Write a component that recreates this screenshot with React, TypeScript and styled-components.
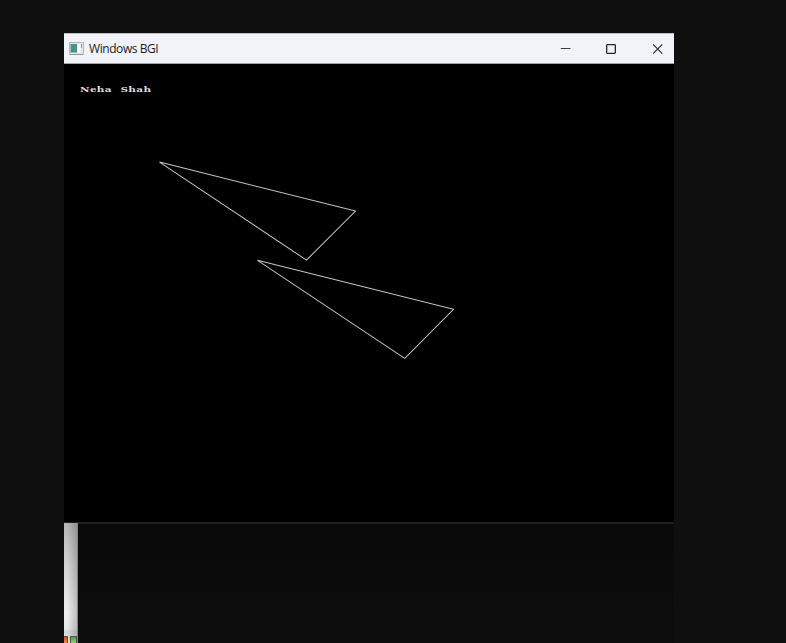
import React from "react";
import styled, { createGlobalStyle } from "styled-components";

const GlobalStyle = createGlobalStyle`
  * { box-sizing: border-box; }
  body { margin: 0; background: #0f0f0f; overflow: hidden; }
`;

const Screen = styled.main`
  width: 786px;
  height: 643px;
  padding: 33px 112px 0 64px;
  background: #0f0f0f;
  overflow: hidden;
`;

const Window = styled.section`
  width: 610px;
  height: 491px;
  display: flex;
  flex-direction: column;
  overflow: hidden;
  border-bottom: 2px solid #212121;
  background: #000;
`;

const TitleBar = styled.header`
  height: 31px;
  flex: none;
  display: flex;
  align-items: center;
  padding-left: 5px;
  background: #f1f3f9;
  border-top: 1px solid #bfc0c4;
  border-bottom: 1px solid #a0a1a4;
`;

const Title = styled.h1`
  flex: 1;
  margin: 0 0 0 5px;
  font: 400 12px/18px "Open Sans", "Noto Sans", sans-serif;
  letter-spacing: -0.43px;
  color: #1d1d20;
`;

const Controls = styled.div`
  display: flex;
  margin-right: -6px;
`;

const ControlButton = styled.button`
  width: 46px;
  height: 29px;
  padding: 0;
  border: 0;
  background: transparent;
  display: grid;
  place-items: center;
`;

const Canvas = styled.div`
  flex: 1;
  display: grid;
  background: #000;

  > * { grid-area: 1 / 1; }
`;

const Label = styled.p`
  margin: 18px 0 0 16px;
  width: 80px;
  height: 14px;
  font: 700 9.5px/14px "DejaVu Serif", serif;
  letter-spacing: 0.3px;
  word-spacing: 4.2px;
  white-space: pre;
  color: #dcdcdc;
  transform: scale(1.1, 0.85);
  transform-origin: 0 50%;
`;

const Drawing = styled.svg`
  display: block;
`;

const Backdrop = styled.div`
  width: 610px;
  height: 119px;
  display: flex;
  align-items: flex-end;
  background: linear-gradient(#090909, #0b0b0b 45%, #0d0d0d);
`;

const Panel = styled.div`
  position: relative;
  width: 14px;
  height: 120px;
  flex: none;
  display: flex;
  flex-direction: column;
  justify-content: flex-end;
  border-right: 1px solid #858585;
  background:
    linear-gradient(90deg, transparent 25%, rgba(0, 0, 0, 0.2)),
    linear-gradient(#b4b4b4, #d0d0d0 30%, #eee 75%, #e7e7e7 88%, #d7d7d7 90%, #e1e1e1);
`;

const Lights = styled.div`
  height: 7px;
  display: flex;
  gap: 2px;
`;

const Light = styled.span<{ $tone: "orange" | "green" }>`
  width: ${({ $tone }) => ($tone === "orange" ? 4 : 7)}px;
  flex: none;
  border: solid #50544f;
  border-width: ${({ $tone }) => ($tone === "orange" ? "1px 1px 0 0" : "1px 1px 0")};
  background: ${({ $tone }) =>
    $tone === "orange"
      ? "linear-gradient(#c95420, #f28b49)"
      : "linear-gradient(#4b9f3b, #8ed46f)"};
`;

const AppIcon = () => (
  <svg width="15" height="13" viewBox="0 0 15 13" aria-hidden="true">
    <defs>
      <linearGradient id="pane" x1="0" y1="0" x2="1" y2="1">
        <stop stopColor="#508eac" />
        <stop offset="1" stopColor="#439576" />
      </linearGradient>
    </defs>
    <rect x=".5" y=".5" width="14" height="12" fill="#e2e6e8" stroke="#b5b8ba" />
    <path d="M1 12.5h13" stroke="#92989a" />
    <rect x="1.5" y="2" width="6.5" height="8.5" fill="url(#pane)" />
    <path d="M8.5 2.5h3v8h-3z" fill="#fff" />
    <path d="M12.5 2v4" stroke="#6fa994" />
  </svg>
);

const triangles = ["95.5,97.8 291.5,146.8 242.5,195.8", "193.5,196 389.5,245 340.8,294"];

export default function App() {
  return (
    <>
      <GlobalStyle />
      <Screen>
        <Window>
          <TitleBar>
            <AppIcon />
            <Title>Windows BGI</Title>
            <Controls>
              <ControlButton aria-label="Minimize">
                <svg width="11" height="10" viewBox="0 0 11 10">
                  <path d="M.8 4.5h9.7" stroke="#3d3e42" />
                </svg>
              </ControlButton>
              <ControlButton aria-label="Maximize">
                <svg width="10" height="10" viewBox="0 0 10 10" fill="none">
                  <rect x=".65" y=".65" width="8.7" height="8.7" rx=".8" stroke="#242529" strokeWidth="1.3" />
                </svg>
              </ControlButton>
              <ControlButton aria-label="Close">
                <svg width="11" height="10" viewBox="0 0 11 10">
                  <path d="M1.1.4l9.2 9.2M10.3.4L1.1 9.6" stroke="#242529" strokeWidth="1.1" />
                </svg>
              </ControlButton>
            </Controls>
          </TitleBar>
          <Canvas>
            <Drawing width="610" height="458" viewBox="0 0 610 458">
              <g transform="translate(0 .3)" fill="none" stroke="#c4c4c4" strokeWidth="1.02">
                {triangles.map((points) => (
                  <polygon key={points} points={points} />
                ))}
              </g>
            </Drawing>
            <Label>Neha Shah</Label>
          </Canvas>
        </Window>
        <Backdrop>
          <Panel>
            <Lights>
              <Light $tone="orange" />
              <Light $tone="green" />
            </Lights>
          </Panel>
        </Backdrop>
      </Screen>
    </>
  );
}
